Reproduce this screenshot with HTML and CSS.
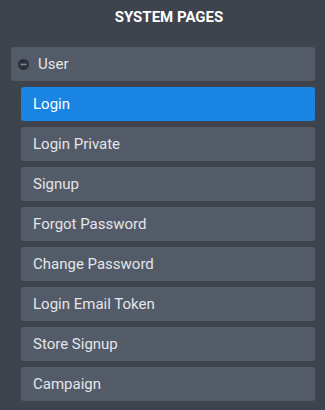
FILE: index.html
```html
<!DOCTYPE html>
<html lang="en">
<head>
    <meta charset="UTF-8">
    <title>System Pages</title>
    <link rel="stylesheet" href="styles.css">
</head>
<body>
    <div class="panel">
        <h2 class="title">SYSTEM PAGES</h2>
        <div class="group">
            <svg class="toggle" width="11" height="11" viewBox="0 0 10 10">
                <circle cx="5" cy="5" r="5" fill="#2c3039"/>
                <rect x="2.2" y="4.2" width="5.6" height="1.6" fill="#7b808a"/>
            </svg>
            <span>User</span>
        </div>
        <ul class="pages">
            <li class="page active">Login</li>
            <li class="page">Login Private</li>
            <li class="page">Signup</li>
            <li class="page">Forgot Password</li>
            <li class="page">Change Password</li>
            <li class="page">Login Email Token</li>
            <li class="page">Store Signup</li>
            <li class="page">Campaign</li>
        </ul>
    </div>
</body>
</html>
```

FILE: styles.css
```css
html, body {
    margin: 0;
    background-color: #3e434e;
}
body {
    font-family: Roboto, "Liberation Sans", sans-serif;
    font-size: 15px;
    color: #e3e5e8;
}
.panel {
    padding: 0 10px 0 11px;
}
.title {
    margin: 0;
    padding: 9px 0 0 12px;
    height: 37px;
    box-sizing: border-box;
    font-size: 15px;
    font-weight: bold;
    color: #ffffff;
    text-align: center;
    line-height: 17px;
}
.group {
    display: flex;
    align-items: center;
    gap: 9px;
    height: 34px;
    margin-top: 10px;
    padding-left: 7px;
    background-color: #535b69;
    border-radius: 3px;
}
.toggle {
    display: block;
}
.pages {
    list-style: none;
    margin: 6px 0 0 10px;
    padding: 0;
    display: flex;
    flex-direction: column;
    gap: 6px;
}
.page {
    height: 34px;
    line-height: 34px;
    padding-left: 12px;
    background-color: #535b69;
    border-radius: 3px;
}
.page.active {
    background-color: #1a84e2;
    color: #ffffff;
}
```
